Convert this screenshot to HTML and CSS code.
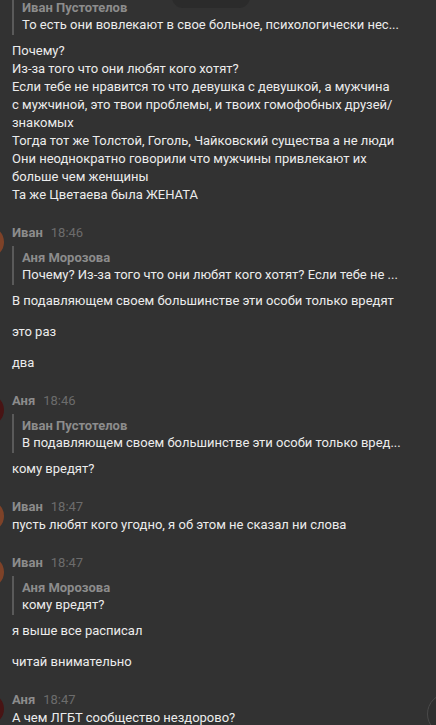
FILE: index.html
```html
<!DOCTYPE html>
<html lang="ru">

<head>
  <meta charset="UTF-8" />
  <meta name="viewport" content="width=device-width, initial-scale=1.0" />
  <title>Чат</title>
  <link rel="stylesheet" href="styles.css">
</head>

<body>
  <div class="date-pill"></div>
  <div id="chat">

    <div class="group">
      <div class="avatar none"></div>
      <div class="body">
        <div class="quote">
          <div class="quote-name">Иван Пустотелов</div>
          <div class="quote-text">То есть они вовлекают в свое больное, психологически нес...</div>
        </div>
        <p>Почему?<br>Из-за того что они любят кого хотят?<br>Если тебе не нравится то что девушка с девушкой, а мужчина с мужчиной, это твои проблемы, и твоих гомофобных друзей/знакомых<br>Тогда тот же Толстой, Гоголь, Чайковский существа а не люди<br>Они неоднократно говорили что мужчины привлекают их больше чем женщины<br>Та же Цветаева была ЖЕНАТА</p>
      </div>
    </div>

    <div class="group">
      <div class="avatar ivan"></div>
      <div class="body">
        <div class="head"><span class="name">Иван</span><span class="time">18:46</span></div>
        <div class="quote">
          <div class="quote-name">Аня Морозова</div>
          <div class="quote-text">Почему? Из-за того что они любят кого хотят? Если тебе не ...</div>
        </div>
        <p>В подавляющем своем большинстве эти особи только вредят</p>
        <p>это раз</p>
        <p>два</p>
      </div>
    </div>

    <div class="group">
      <div class="avatar anya"></div>
      <div class="body">
        <div class="head"><span class="name">Аня</span><span class="time">18:46</span></div>
        <div class="quote">
          <div class="quote-name">Иван Пустотелов</div>
          <div class="quote-text">В подавляющем своем большинстве эти особи только вред...</div>
        </div>
        <p>кому вредят?</p>
      </div>
    </div>

    <div class="group">
      <div class="avatar ivan"></div>
      <div class="body">
        <div class="head"><span class="name">Иван</span><span class="time">18:47</span></div>
        <p>пусть любят кого угодно, я об этом не сказал ни слова</p>
      </div>
    </div>

    <div class="group">
      <div class="avatar ivan"></div>
      <div class="body">
        <div class="head"><span class="name">Иван</span><span class="time">18:47</span></div>
        <div class="quote">
          <div class="quote-name">Аня Морозова</div>
          <div class="quote-text">кому вредят?</div>
        </div>
        <p>я выше все расписал</p>
        <p>читай внимательно</p>
      </div>
    </div>

    <div class="group">
      <div class="avatar anya"></div>
      <div class="body">
        <div class="head"><span class="name">Аня</span><span class="time">18:47</span></div>
        <p>А чем ЛГБТ сообщество нездорово?</p>
      </div>
    </div>

  </div>
  <div class="corner">
    <div class="scroll-btn"></div>
  </div>
</body>

</html>
```

FILE: styles.css
```css
html {
  overflow: hidden;
}

body {
  font-family: Roboto, 'Liberation Sans', sans-serif;
  font-size: 13px;
  margin: 0;
  padding: 0;
  background-color: #323232;
  color: #ececec;
  overflow: hidden;
  width: 436px;
  height: 725px;
  position: relative;
}

#chat {
  margin-top: -8px;
  width: 397px;
}

.group {
  display: flex;
  align-items: flex-start;
  margin-bottom: 20px;
}

.avatar {
  flex: none;
  width: 32px;
  height: 32px;
  border-radius: 50%;
  margin-left: -28px;
  margin-right: 8px;
  margin-top: 2px;
}

.avatar.none {
  background-color: transparent;
}

.avatar.ivan {
  background-color: #7e4228;
}

.avatar.anya {
  background-color: #481414;
}

.body {
  flex: 1;
  min-width: 0;
  line-height: 18px;
}

.head {
  height: 18px;
}

.name {
  color: #8c8c8c;
  font-weight: 700;
  margin-right: 8px;
}

.time {
  color: #6c6c6c;
}

.quote {
  border-left: 2px solid #5a5a5a;
  padding: 3px 0 2px 8px;
  margin: 4px 0 7px;
  line-height: 17px;
}

.quote-name {
  color: #8c8c8c;
  font-weight: 700;
}

.quote-text {
  color: #ececec;
  white-space: nowrap;
}

p {
  margin: 0;
}

p + p {
  margin-top: 13px;
}

.date-pill {
  position: absolute;
  top: -14px;
  left: 172px;
  width: 78px;
  height: 22px;
  border-radius: 11px;
  background-color: #2b2b2b;
}

.corner {
  position: absolute;
  right: 0;
  bottom: 0;
  width: 9px;
  height: 32px;
  overflow: hidden;
}

.scroll-btn {
  width: 40px;
  height: 40px;
  border-radius: 50%;
  border: 1px solid #4a4a4a;
  background-color: #2f2f2f;
}
```
